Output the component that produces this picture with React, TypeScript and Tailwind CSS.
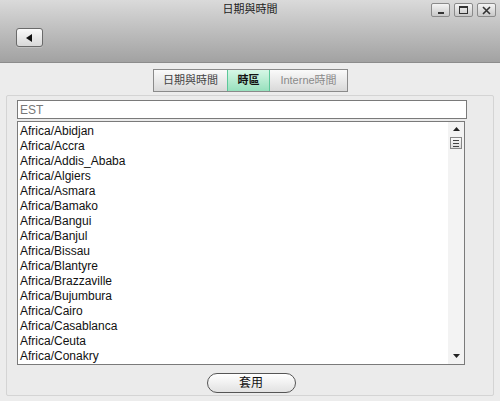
import React from "react";

const zones = [
  "Africa/Abidjan",
  "Africa/Accra",
  "Africa/Addis_Ababa",
  "Africa/Algiers",
  "Africa/Asmara",
  "Africa/Bamako",
  "Africa/Bangui",
  "Africa/Banjul",
  "Africa/Bissau",
  "Africa/Blantyre",
  "Africa/Brazzaville",
  "Africa/Bujumbura",
  "Africa/Cairo",
  "Africa/Casablanca",
  "Africa/Ceuta",
  "Africa/Conakry",
];

const font = { fontFamily: '"Liberation Sans", Arial, "Noto Sans CJK TC", sans-serif' };

function WinButton({ children }: { children: React.ReactNode }) {
  return (
    <div className="flex h-[14px] w-[19px] items-center justify-center rounded-[2px] border border-[#8a8a8a] bg-gradient-to-b from-[#f4f4f4] to-[#c8c8c8] text-[#333]">
      {children}
    </div>
  );
}

export default function App() {
  return (
    <div className="h-[401px] w-[500px] overflow-hidden bg-[#ececec]" style={font}>
      {/* header */}
      <div className="relative h-[63px] border-b border-[#8c8c8c] bg-gradient-to-b from-[#dadada] to-[#a2a2a2]">
        <div className="pt-[2px] text-center text-[11px] leading-[14px] text-[#222]">日期與時間</div>
        <div className="absolute right-[4px] top-[3px] flex gap-[4px]">
          <WinButton>
            <div className="mt-[6px] h-[2px] w-[6px] bg-[#333]" />
          </WinButton>
          <WinButton>
            <div className="h-[8px] w-[9px] border border-[#333] border-t-2" />
          </WinButton>
          <WinButton>
            <svg width="9" height="9" viewBox="0 0 9 9">
              <path d="M1 1 L8 8 M8 1 L1 8" stroke="#333" strokeWidth="1.6" />
            </svg>
          </WinButton>
        </div>
        <div className="ml-[16px] mt-[12px] flex h-[19px] w-[27px] items-center justify-center rounded-[3px] border border-[#6a6a6a] bg-gradient-to-b from-[#fafafa] to-[#d8d8d8] shadow-[0_1px_0_#c0c0c0]">
          <svg width="7" height="8" viewBox="0 0 7 8">
            <path d="M6 0 L0 4 L6 8 Z" fill="#111" />
          </svg>
        </div>
      </div>

      {/* tabs */}
      <div className="mt-[6px] flex justify-center">
        <div className="ml-[1px] flex h-[23px] border border-[#8a8a8a] text-[11px]">
          <div className="flex w-[73px] items-center justify-center bg-gradient-to-b from-[#fafafa] to-[#d9d9d9] text-[#444]">
            日期與時間
          </div>
          <div className="flex w-[43px] items-center justify-center border-x border-[#5cc79a] bg-gradient-to-b from-[#d6f7e6] to-[#97e0bd] font-bold text-[#111]">
            時區
          </div>
          <div className="flex w-[77px] items-center justify-center bg-gradient-to-b from-[#fafafa] to-[#d9d9d9] text-[#8a8a8a]">
            Interne時間
          </div>
        </div>
      </div>

      {/* panel */}
      <div className="mx-[6px] mt-[3px] h-[301px] rounded-[2px] border border-[#d4d4d4] bg-[#ebebeb] px-[10px] pt-[4px]">
        <div className="flex h-[19px] w-[450px] items-center border border-[#7a7a7a] bg-white px-[2px] text-[12px] text-[#777]">
          EST
        </div>
        <div className="mt-[2px] flex h-[244px] w-[448px] border border-[#7a7a7a] bg-white">
          <div className="flex-1 overflow-hidden pl-[2px] pt-[2px] text-[12px] leading-[15px] text-[#111]">
            {zones.map((z) => (
              <div key={z}>{z}</div>
            ))}
          </div>
          <div className="flex w-[16px] flex-col items-center bg-[#f3f3f3]">
            <svg className="mt-[5px]" width="7" height="4" viewBox="0 0 7 4">
              <path d="M0 4 L3.5 0 L7 4 Z" fill="#222" />
            </svg>
            <div className="mt-[6px] flex h-[12px] w-[12px] flex-col items-center justify-center gap-[2px] border border-[#888] bg-gradient-to-b from-[#fafafa] to-[#dcdcdc]">
              <div className="h-px w-[6px] bg-[#444]" />
              <div className="h-px w-[6px] bg-[#444]" />
              <div className="h-px w-[6px] bg-[#444]" />
            </div>
            <div className="flex-1" />
            <svg className="mb-[6px]" width="7" height="4" viewBox="0 0 7 4">
              <path d="M0 0 L3.5 4 L7 0 Z" fill="#222" />
            </svg>
          </div>
        </div>
        <div className="mt-[8px] flex justify-center">
          <div className="ml-[2px] flex h-[20px] w-[89px] items-center justify-center rounded-full border border-[#555] bg-gradient-to-b from-[#ffffff] to-[#e2e2e2] text-[12px] text-[#111]">
            套用
          </div>
        </div>
      </div>
    </div>
  );
}
